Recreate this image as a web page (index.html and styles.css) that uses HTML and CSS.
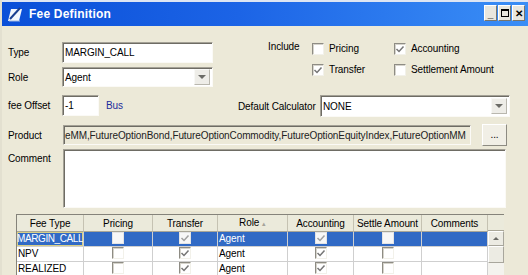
FILE: index.html
```html
<!DOCTYPE html>
<html lang="en">
<head>
    <meta charset="UTF-8">
    <title>Fee Definition</title>
    <link rel="stylesheet" href="styles.css">
</head>
<body>

<div class="window">

    <div class="titlebar">
        <svg class="app-icon" viewBox="0 0 16 16">
            <path d="M1 15 L4 3 L15 3 L12 15 Z" fill="#f4f7fc"/>
            <path d="M3 13 L13 2" stroke="#1b3f8f" stroke-width="2"/>
            <path d="M2 15 L13 15" stroke="#9fb6e0" stroke-width="1"/>
        </svg>
        <span class="title">Fee Definition</span>
        <div class="win-buttons">
            <span class="wbtn wbtn-min">_</span>
            <span class="wbtn wbtn-max"><span class="max-box"></span></span>
            <span class="wbtn wbtn-close">&#x2715;</span>
        </div>
    </div>

    <div class="content">

        <div class="top">
            <div class="left-col">
                <div class="row row-type">
                    <label class="lbl">Type</label>
                    <div class="field type-field">MARGIN_CALL</div>
                </div>
                <div class="row row-role">
                    <label class="lbl">Role</label>
                    <div class="field select role-select">
                        <span class="select-text">Agent</span>
                        <span class="drop-btn"><span class="tri"></span></span>
                    </div>
                </div>
                <div class="row row-offset">
                    <label class="lbl">fee Offset</label>
                    <div class="field offset-field">-1</div>
                    <span class="bus">Bus</span>
                </div>
            </div>

            <div class="right-col">
                <div class="include">
                    <span class="include-label">Include</span>
                    <div class="checks">
                        <div class="check"><span class="cb"></span>Pricing</div>
                        <div class="check"><span class="cb on"><svg viewBox="0 0 10 10"><path d="M1.5 5 L4 7.5 L8.5 2.5"/></svg></span>Accounting</div>
                        <div class="check"><span class="cb on"><svg viewBox="0 0 10 10"><path d="M1.5 5 L4 7.5 L8.5 2.5"/></svg></span>Transfer</div>
                        <div class="check"><span class="cb"></span>Settlement Amount</div>
                    </div>
                </div>
                <div class="row row-calc">
                    <label class="lbl calc-lbl">Default Calculator</label>
                    <div class="field select calc-select">
                        <span class="select-text">NONE</span>
                        <span class="drop-btn"><span class="tri"></span></span>
                    </div>
                </div>
            </div>
        </div>

        <div class="row row-product">
            <label class="lbl lbl-wide">Product</label>
            <div class="field product-field">eMM,FutureOptionBond,FutureOptionCommodity,FutureOptionEquityIndex,FutureOptionMM</div>
            <span class="dots-btn">...</span>
        </div>

        <div class="row row-comment">
            <label class="lbl lbl-wide">Comment</label>
            <div class="field comment-field"></div>
        </div>

        <div class="grid-wrap">
            <table class="fees">
                <colgroup>
                    <col style="width:67px">
                    <col style="width:69px">
                    <col style="width:65px">
                    <col style="width:70px">
                    <col style="width:66px">
                    <col style="width:68px">
                    <col style="width:66px">
                </colgroup>
                <thead>
                    <tr>
                        <th>Fee Type</th>
                        <th>Pricing</th>
                        <th>Transfer</th>
                        <th>Role <span class="sort">&#x25B4;</span></th>
                        <th>Accounting</th>
                        <th>Settle Amount</th>
                        <th>Comments</th>
                    </tr>
                </thead>
                <tbody>
                    <tr class="selected">
                        <td class="focus">MARGIN_CALL</td>
                        <td class="c"><span class="cb"></span></td>
                        <td class="c"><span class="cb on"><svg viewBox="0 0 10 10"><path d="M1.5 5 L4 7.5 L8.5 2.5"/></svg></span></td>
                        <td>Agent</td>
                        <td class="c"><span class="cb on"><svg viewBox="0 0 10 10"><path d="M1.5 5 L4 7.5 L8.5 2.5"/></svg></span></td>
                        <td class="c"><span class="cb"></span></td>
                        <td></td>
                    </tr>
                    <tr>
                        <td>NPV</td>
                        <td class="c"><span class="cb"></span></td>
                        <td class="c"><span class="cb on"><svg viewBox="0 0 10 10"><path d="M1.5 5 L4 7.5 L8.5 2.5"/></svg></span></td>
                        <td>Agent</td>
                        <td class="c"><span class="cb on"><svg viewBox="0 0 10 10"><path d="M1.5 5 L4 7.5 L8.5 2.5"/></svg></span></td>
                        <td class="c"><span class="cb"></span></td>
                        <td></td>
                    </tr>
                    <tr>
                        <td>REALIZED</td>
                        <td class="c"><span class="cb"></span></td>
                        <td class="c"><span class="cb on"><svg viewBox="0 0 10 10"><path d="M1.5 5 L4 7.5 L8.5 2.5"/></svg></span></td>
                        <td>Agent</td>
                        <td class="c"><span class="cb on"><svg viewBox="0 0 10 10"><path d="M1.5 5 L4 7.5 L8.5 2.5"/></svg></span></td>
                        <td class="c"><span class="cb"></span></td>
                        <td></td>
                    </tr>
                </tbody>
            </table>
            <div class="vscroll">
                <div class="vs-head"></div>
                <div class="vs-btn"><span class="tri-up"></span></div>
                <div class="vs-thumb"></div>
                <div class="vs-track"></div>
            </div>
        </div>

    </div>
</div>

</body>
</html>
```

FILE: styles.css
```css
/* General */
* {
    box-sizing: border-box;
}

body {
    margin: 0;
    font-family: "Liberation Sans", Arial, sans-serif;
    font-size: 10px;
    letter-spacing: -0.1px;
    color: #000;
    background: #ece9d8;
    width: 528px;
    height: 275px;
    overflow: hidden;
}

.window {
    width: 528px;
    height: 275px;
    background: #ece9d8;
    border-left: 2px solid #e3e0d0;
    overflow: hidden;
}

/* Title bar */
.titlebar {
    height: 26px;
    display: flex;
    align-items: center;
    padding: 0 3px 0 5px;
    border-top: 2px solid #dde5f3;
    background: linear-gradient(90deg, #0a4fd8 0%, #1c64e6 45%, #3a8ef6 100%);
}

.app-icon {
    width: 16px;
    height: 16px;
    margin-right: 6px;
}

.title {
    flex: 1;
    color: #fff;
    font-weight: bold;
    font-size: 12px;
    letter-spacing: 0.2px;
}

.win-buttons {
    display: flex;
    gap: 1px;
    margin-top: -2px;
}

.wbtn {
    width: 13px;
    height: 16px;
    display: flex;
    align-items: center;
    justify-content: center;
    background: #e8e6de;
    border: 1px solid;
    border-color: #fff #77756c #77756c #fff;
    font-weight: bold;
    font-size: 10px;
    color: #000;
}

.wbtn-min {
    align-items: flex-end;
    padding-bottom: 2px;
    line-height: 8px;
}

.max-box {
    width: 8px;
    height: 8px;
    border: 1px solid #000;
    border-top-width: 2px;
}

/* Form */
.content {
    padding: 16px 0 0 6px;
}

.top {
    display: flex;
}

.left-col {
    width: 230px;
}

.row {
    display: flex;
    align-items: center;
}

.lbl {
    width: 54px;
    flex: none;
    white-space: nowrap;
}

.lbl-wide {
    width: 55px;
}

.field {
    background: #fff;
    border: 1px solid;
    border-color: #a4a196 #fbfaf6 #fbfaf6 #a4a196;
    box-shadow: inset 1px 1px 0 #6e6c64;
    padding: 0 2px;
    display: flex;
    align-items: center;
    white-space: nowrap;
    overflow: hidden;
}

.type-field {
    width: 151px;
    height: 21px;
}

.row-role {
    margin-top: 4px;
}

.select {
    justify-content: space-between;
    padding-right: 2px;
}

.select-text {
    flex: 1;
}

.role-select {
    width: 151px;
    height: 20px;
}

.drop-btn {
    width: 16px;
    height: 16px;
    display: flex;
    align-items: center;
    justify-content: center;
    background: #eeede8;
    border: 1px solid;
    border-color: #f8f8f6 #b9b7ae #b9b7ae #f8f8f6;
}

.tri {
    width: 0;
    height: 0;
    border-left: 4px solid transparent;
    border-right: 4px solid transparent;
    border-top: 4px solid #6b6b66;
}

.row-offset {
    margin-top: 8px;
}

.offset-field {
    width: 37px;
    height: 21px;
}

.bus {
    margin-left: 7px;
    color: #1c2c9c;
}

.right-col {
    flex: 1;
}

.include {
    display: flex;
    padding-left: 30px;
}

.include-label {
    width: 44px;
    margin-top: -1px;
}

.checks {
    display: grid;
    grid-template-columns: 82px auto;
    row-gap: 8px;
}

.check {
    display: flex;
    align-items: center;
    height: 13px;
}

.check .cb {
    margin-right: 5px;
}

.cb {
    display: inline-block;
    width: 12px;
    height: 12px;
    background: #fff;
    border: 1px solid;
    border-color: #8e8c84 #f2f1ea #f2f1ea #8e8c84;
    box-shadow: inset 1px 1px 0 #d6d4cc;
    vertical-align: middle;
}

.cb svg {
    display: block;
    width: 10px;
    height: 10px;
}

.cb svg path {
    fill: none;
    stroke: #767676;
    stroke-width: 1.5;
}

.row-calc {
    margin-top: 19px;
}

.calc-lbl {
    width: 82px;
}

.calc-select {
    width: 190px;
    height: 22px;
}

.row-product {
    margin-top: 7px;
}

.product-field {
    width: 408px;
    height: 20px;
    background: #ece9d8;
    color: #222;
    padding-left: 1px;
}

.dots-btn {
    width: 25px;
    height: 22px;
    margin-left: 11px;
    display: flex;
    align-items: flex-end;
    justify-content: center;
    padding-bottom: 5px;
    background: #f1efe6;
    border: 1px solid;
    border-color: #fff #8d8b82 #8d8b82 #fff;
}

.row-comment {
    margin-top: 3px;
    align-items: flex-start;
}

.row-comment .lbl {
    padding-top: 4px;
}

.comment-field {
    width: 443px;
    height: 59px;
}

/* Grid */
.grid-wrap {
    display: flex;
    width: 488px;
    margin-top: 6px;
    margin-left: 8px;
    border-top: 1px solid #85837a;
    border-left: 1px solid #85837a;
    background: #fff;
}

.fees {
    width: 471px;
    table-layout: fixed;
    border-collapse: separate;
    border-spacing: 0;
}

.fees th {
    font-weight: normal;
    line-height: 15px;
    padding: 0;
    text-align: center;
    background: #ebeadb;
    border-right: 1px solid #c5c2b2;
    border-bottom: 1px solid #a9a697;
    white-space: nowrap;
}

.sort {
    font-size: 7px;
    color: #a5a39a;
}

.fees td {
    line-height: 14px;
    padding: 0 1px;
    border-right: 1px solid #cfcfcf;
    border-bottom: 1px solid #cfcfcf;
    white-space: nowrap;
    overflow: hidden;
}

.fees td.c {
    text-align: center;
}

.fees .cb {
    vertical-align: -2px;
}

.selected td {
    background: #316ac5;
    color: #fff;
}

.selected td.focus {
    padding-left: 0;
    letter-spacing: -0.4px;
    box-shadow: inset 0 0 0 1px #d9cf86;
}

.selected .cb {
    border-color: #e4e4e4;
    box-shadow: none;
    background: #f7f7f7;
}

.selected .cb svg path {
    stroke: #a0a0a0;
}

.vscroll {
    width: 16px;
    display: flex;
    flex-direction: column;
    background: #f4f3ee;
}

.vs-head {
    height: 16px;
    background: #ebeadb;
    border-bottom: 1px solid #a9a697;
}

.vs-btn {
    height: 15px;
    display: flex;
    align-items: center;
    justify-content: center;
    background: #ecebe3;
    border: 1px solid;
    border-color: #fff #a8a69c #a8a69c #fff;
}

.tri-up {
    width: 0;
    height: 0;
    border-left: 3px solid transparent;
    border-right: 3px solid transparent;
    border-bottom: 3px solid #6b6b66;
}

.vs-thumb {
    height: 17px;
    background: #ecebe3;
    border: 1px solid;
    border-color: #fff #a8a69c #a8a69c #fff;
}

.vs-track {
    flex: 1;
}
```
